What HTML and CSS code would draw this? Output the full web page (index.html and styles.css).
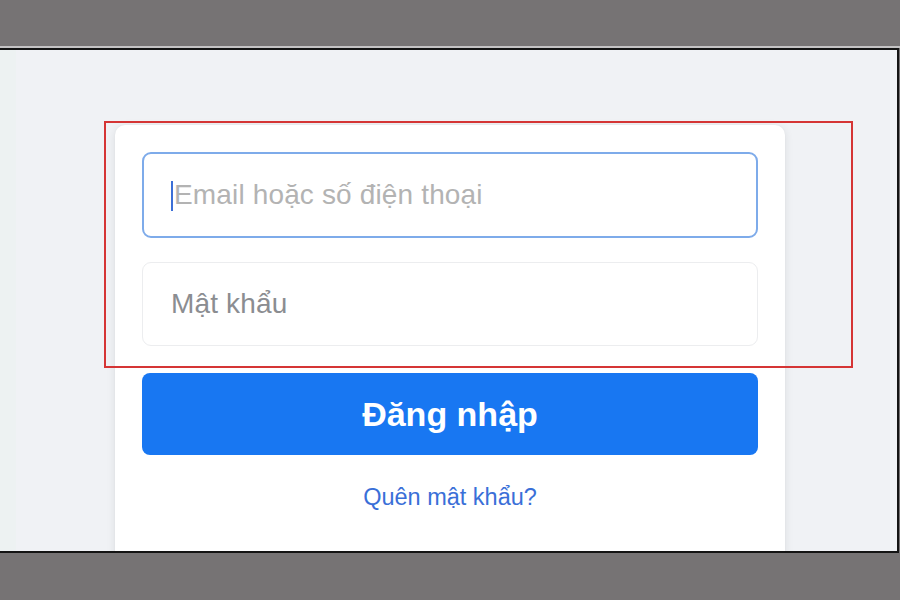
FILE: index.html
```html
<!DOCTYPE html>
<html lang="vi">
<head>
<meta charset="utf-8">
<title>Đăng nhập</title>
<link rel="stylesheet" href="styles.css">
</head>
<body>
<div class="frame">
  <div class="top-band"></div>
  <div class="screen">
    <div class="card">
      <div class="field field-focus">
        <span class="caret"></span>
        <span class="placeholder">Email hoặc số điện thoại</span>
      </div>
      <div class="field field-plain">
        <span class="placeholder placeholder-dark">Mật khẩu</span>
      </div>
      <div class="btn">Đăng nhập</div>
      <div class="forgot">Quên mật khẩu?</div>
    </div>
    <div class="highlight"></div>
  </div>
  <div class="bottom-band"></div>
</div>
</body>
</html>
```
FILE: styles.css
```css
html, body {
  margin: 0;
  padding: 0;
}
body {
  background: #767374;
  font-family: "Liberation Sans", Arial, sans-serif;
}
.frame {
  width: 900px;
  height: 600px;
  display: flex;
  flex-direction: column;
  overflow: hidden;
}
.top-band {
  height: 46px;
  flex: none;
  background: #767374;
  border-bottom: 2px solid #c4c3c4;
}
.screen {
  position: relative;
  flex: none;
  height: 501px;
  width: 897px;
  background: #f0f2f5;
  border-top: 2px solid #141414;
  border-bottom: 2px solid #141414;
  border-right: 2px solid #141414;
  overflow: hidden;
  box-sizing: content-box;
}
.screen::before {
  content: "";
  position: absolute;
  left: 0;
  top: 0;
  bottom: 0;
  width: 16px;
  background: #edf2f2;
}
.card {
  position: relative;
  margin: 75px 0 0 115px;
  width: 670px;
  box-sizing: border-box;
  padding: 27px 27px 80px;
  background: #ffffff;
  border-radius: 10px;
  box-shadow: 0 2px 10px rgba(0, 0, 0, 0.09), 0 0 2px rgba(0,0,0,0.04);
  display: flex;
  flex-direction: column;
}
.field {
  height: 86px;
  box-sizing: border-box;
  border-radius: 9px;
  display: flex;
  align-items: center;
  padding-left: 29px;
  background: #fff;
}
.field-focus {
  border: 2px solid #7eabea;
  padding-left: 27px;
}
.field-plain {
  margin-top: 24px;
  height: 84px;
  border: 1px solid #ecedef;
  padding-left: 28px;
}
.caret {
  width: 2px;
  height: 30px;
  background: #3c6fd7;
  margin-right: 1px;
  margin-top: 1px;
}
.placeholder {
  font-size: 28px;
  color: #b3b3b3;
  letter-spacing: 0.15px;
}
.placeholder-dark {
  color: #8b8d91;
}
.btn {
  margin-top: 27px;
  height: 82px;
  border-radius: 8px;
  background: #1877f2;
  color: #ffffff;
  font-weight: bold;
  font-size: 34px;
  display: flex;
  align-items: center;
  justify-content: center;
}
.forgot {
  margin-top: 27px;
  text-align: center;
  font-size: 23.5px;
  color: #3a6fd8;
  line-height: 30px;
}
.highlight {
  position: absolute;
  left: 104px;
  top: 71px;
  width: 749px;
  height: 247px;
  border: 2px solid #d53535;
  box-sizing: border-box;
}
.bottom-band {
  flex: 1;
  background: #767374;
}
```
